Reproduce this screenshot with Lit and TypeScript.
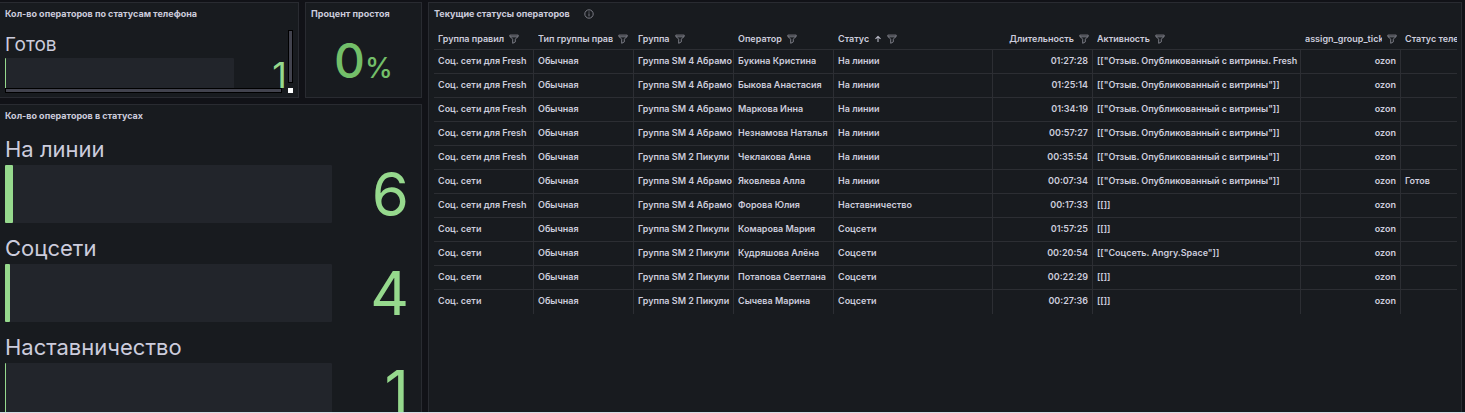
import { LitElement, html, css, svg, nothing } from "lit";
import { customElement, property } from "lit/decorators.js";
import { classMap } from "lit/directives/class-map.js";

interface Column {
  title: string;
  cls: string;
  right?: boolean;
  sorted?: boolean;
  filter?: boolean;
}

const COLUMNS: Column[] = [
  { title: "Группа правил", cls: "w100", filter: true },
  { title: "Тип группы прав", cls: "w100", filter: true },
  { title: "Группа", cls: "w100", filter: true },
  { title: "Оператор", cls: "w100", filter: true },
  { title: "Статус", cls: "w160", sorted: true, filter: true },
  { title: "Длительность", cls: "w100", right: true, filter: true },
  { title: "Активность", cls: "auto", filter: true },
  { title: "assign_group_tick", cls: "w100", right: true, filter: true },
  { title: "Статус теле", cls: "w56" },
];

const SM4 = "Группа SM 4 Абрамо";
const SM2 = "Группа SM 2 Пикули";
const FRESH = "Соц. сети для Fresh";
const SOCIAL = "Соц. сети";
const REVIEW = '[["Отзыв. Опубликованный с витрины"]]';

const ROWS: string[][] = [
  [FRESH, "Обычная", SM4, "Букина Кристина", "На линии", "01:27:28", '[["Отзыв. Опубликованный с витрины. Fresh', "ozon", ""],
  [FRESH, "Обычная", SM4, "Быкова Анастасия", "На линии", "01:25:14", REVIEW, "ozon", ""],
  [FRESH, "Обычная", SM4, "Маркова Инна", "На линии", "01:34:19", REVIEW, "ozon", ""],
  [FRESH, "Обычная", SM4, "Незнамова Наталья", "На линии", "00:57:27", REVIEW, "ozon", ""],
  [FRESH, "Обычная", SM2, "Чеклакова Анна", "На линии", "00:35:54", REVIEW, "ozon", ""],
  [SOCIAL, "Обычная", SM4, "Яковлева Алла", "На линии", "00:07:34", REVIEW, "ozon", "Готов"],
  [FRESH, "Обычная", SM4, "Форова Юлия", "Наставничество", "00:17:33", "[[]]", "ozon", ""],
  [SOCIAL, "Обычная", SM2, "Комарова Мария", "Соцсети", "01:57:25", "[[]]", "ozon", ""],
  [SOCIAL, "Обычная", SM2, "Кудряшова Алёна", "Соцсети", "00:20:54", '[["Соцсеть. Angry.Space"]]', "ozon", ""],
  [SOCIAL, "Обычная", SM2, "Потапова Светлана", "Соцсети", "00:22:29", "[[]]", "ozon", ""],
  [SOCIAL, "Обычная", SM2, "Сычева Марина", "Соцсети", "00:27:36", "[[]]", "ozon", ""],
];

const filterIcon = svg`<svg class="icon" viewBox="0 0 10 10" width="10" height="10" aria-hidden="true">
  <path d="M.8 1.1h8.4v1.2L6.3 5.2v2.7L3.7 9.3V5.2L.8 2.3zM1 2.8h8" /></svg>`;
const arrowIcon = svg`<svg class="icon arrow" viewBox="0 0 8 8" width="8" height="8" aria-hidden="true">
  <path d="M4 7V1.4M1.5 3.8 4 1.3l2.5 2.5" /></svg>`;
const infoIcon = svg`<svg class="icon" viewBox="0 0 10 10" width="10" height="10" aria-hidden="true">
  <circle cx="5" cy="5" r="4.2" /><path d="M5 2.5v1.1M5 4.4v3" /></svg>`;

@customElement("bar-gauge")
export class BarGauge extends LitElement {
  @property() label = "";
  @property({ type: Number }) value = 0;
  @property({ type: Number }) max = 250;
  @property({ type: Boolean, reflect: true }) compact = false;

  static styles = css`
    :host { display: block; }
    .label { font-size: 22px; line-height: 32px; color: #ccccdc; }
    .row { display: grid; grid-template-columns: 1fr 77px; height: 58px; align-items: center; }
    .track { height: 100%; background: #22252b; border-radius: 1px; }
    .fill { height: 100%; min-width: 1px; background: #96d98d; border-radius: 1px; }
    .value { text-align: right; font-size: 60px; line-height: 58px; color: #96d98d; }
    :host([compact]) .label { padding-top: 2px; font-size: 19px; line-height: 26px; }
    :host([compact]) .row { grid-template-columns: 1fr 53px; height: 34px; }
    :host([compact]) .value { font-size: 36px; line-height: 34px; }
  `;

  render() {
    const share = (this.value / this.max) * 100;
    return html`
      <div class="label" id="label">${this.label}</div>
      <div class="row">
        <div class="track" role="meter" aria-labelledby="label" aria-valuemin="0"
          aria-valuemax=${this.max} aria-valuenow=${this.value}>
          <div class="fill" style="width:${share}%"></div>
        </div>
        <div class="value">${this.value}</div>
      </div>
    `;
  }
}

@customElement("app-root")
export class AppRoot extends LitElement {
  static styles = css`
    :host {
      display: block;
      box-sizing: border-box;
      height: 100vh;
      overflow: hidden;
      background: #111217;
      border-bottom: 1px solid #d3dde6;
      color: #ccccdc;
      font-family: Inter, "Liberation Sans", sans-serif;
      font-size: 9px;
      line-height: 16px;
    }
    .board {
      box-sizing: border-box;
      height: 100%;
      display: grid;
      grid-template-columns: minmax(0, 422fr) minmax(0, 1034fr);
      gap: 6px;
      padding: 2px 3px 0 0;
    }
    .left {
      display: grid;
      grid-template-columns: minmax(0, 299fr) minmax(0, 117fr);
      grid-template-rows: 96px minmax(0, 1fr);
      gap: 6px;
      min-height: 0;
    }
    .panel {
      position: relative;
      box-sizing: border-box;
      min-height: 0;
      overflow: hidden;
      background: #181b1f;
      border: 1px solid #292b31;
      display: flex;
      flex-direction: column;
    }
    .flush { border-left: 0; }
    .open { border-bottom: 0; }
    .wide { grid-column: 1 / -1; }
    h2 {
      margin: 0;
      padding: 3px 5px 0;
      font-size: 9px;
      line-height: 16px;
      font-weight: 700;
      white-space: nowrap;
      display: flex;
      align-items: center;
      gap: 14px;
    }
    .scroller { margin: 8px 11px 9px 5px; flex: 1; min-height: 0; overflow: hidden; }
    .bars { padding: 9px 12px 0 5px; display: flex; flex-direction: column; gap: 9px; }
    .thumb { position: absolute; box-sizing: border-box; background: #42434e; border: 1px solid #000; }
    .across { left: 5px; right: 16px; bottom: 4px; height: 5px; }
    .down { top: 27px; right: 5px; bottom: 14px; width: 5px; }
    .corner { position: absolute; right: 5px; bottom: 4px; width: 5px; height: 5px; background: #fff; }
    .stat {
      flex: 1;
      display: flex;
      align-items: baseline;
      justify-content: center;
      color: #73bf69;
      font-weight: 500;
      font-size: 48px;
      line-height: 78px;
    }
    .unit { font-size: 28px; }
    .table-wrap { padding: 7px 4px 0 5px; overflow: hidden; }
    table { width: 100%; table-layout: fixed; border-collapse: separate; border-spacing: 0; }
    .w100 { width: 100px; }
    .w160 { width: 159px; }
    .w56 { width: 56px; }
    th, td {
      box-sizing: border-box;
      height: 24px;
      padding: 0 0 0 4px;
      overflow: hidden;
      white-space: nowrap;
      text-align: left;
      font-weight: 600;
      border-bottom: 1px solid #2c2e33;
    }
    th { height: 21px; }
    td { border-right: 1px solid #2c2e33; padding-bottom: 2px; }
    td:last-child { border-right: 0; }
    tr:last-child td { border-bottom: 0; }
    td.right { text-align: right; padding-right: 4px; }
    .head { display: flex; align-items: center; gap: 5px; padding-right: 4px; }
    .right .head { justify-content: flex-end; }
    .title { overflow: hidden; min-width: 0; }
    .last .head { padding-right: 0; }
    button {
      all: unset;
      display: flex;
      align-items: center;
      gap: 4px;
      cursor: pointer;
      flex: none;
    }
    button.title { flex: 0 1 auto; display: block; }
    .icon { display: block; fill: none; stroke: #85868f; stroke-width: 0.9; stroke-linejoin: round; }
    .arrow { stroke: #b4b5c2; stroke-width: 1.1; }
  `;

  private header(c: Column, i: number) {
    return html`<th scope="col" class=${classMap({ [c.cls]: true, right: !!c.right, last: i === COLUMNS.length - 1 })}
      aria-sort=${c.sorted ? "ascending" : nothing}>
      <div class="head">
        <button class="title">${c.title}</button>
        ${c.sorted ? arrowIcon : nothing}
        ${c.filter ? html`<button aria-label="Фильтр: ${c.title}">${filterIcon}</button>` : nothing}
      </div>
    </th>`;
  }

  render() {
    return html`
      <main class="board">
        <div class="left">
          <section class="panel flush">
            <h2>Кол-во операторов по статусам телефона</h2>
            <div class="scroller"><bar-gauge compact label="Готов" .value=${1}></bar-gauge></div>
            <div class="thumb across"></div>
            <div class="thumb down"></div>
            <div class="corner"></div>
          </section>
          <section class="panel">
            <h2>Процент простоя</h2>
            <div class="stat"><span>0</span><span class="unit">%</span></div>
          </section>
          <section class="panel wide flush open">
            <h2>Кол-во операторов в статусах</h2>
            <div class="bars">
              <bar-gauge label="На линии" .value=${6}></bar-gauge>
              <bar-gauge label="Соцсети" .value=${4}></bar-gauge>
              <bar-gauge label="Наставничество" .value=${1}></bar-gauge>
            </div>
          </section>
        </div>
        <section class="panel open">
          <h2>Текущие статусы операторов <button aria-label="Описание">${infoIcon}</button></h2>
          <div class="table-wrap">
            <table>
              <thead><tr>${COLUMNS.map((c, i) => this.header(c, i))}</tr></thead>
              <tbody>
                ${ROWS.map((r) => html`<tr>${r.map((v, i) => html`<td class=${COLUMNS[i].right ? "right" : ""}>${v}</td>`)}</tr>`)}
              </tbody>
            </table>
          </div>
        </section>
      </main>
    `;
  }
}
